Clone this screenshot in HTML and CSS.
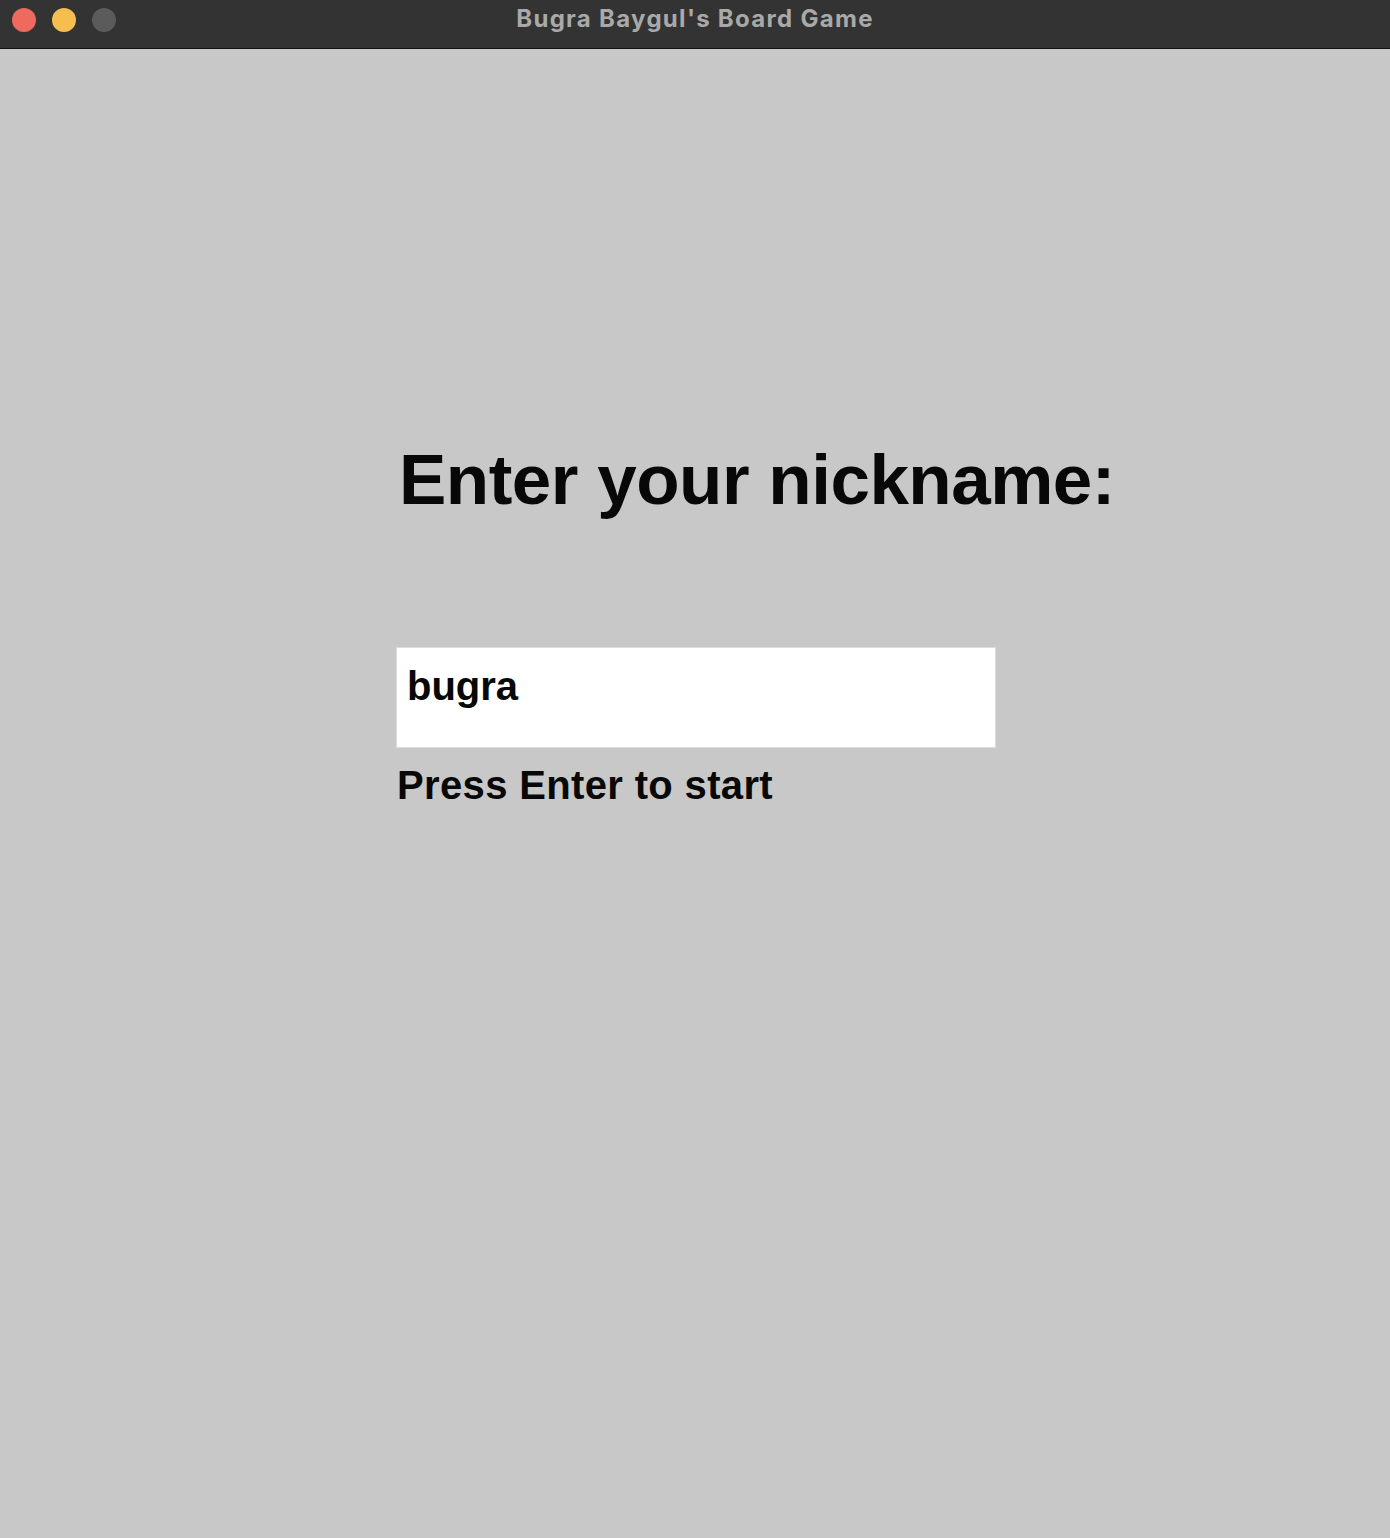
FILE: index.html
```html
<!DOCTYPE html>
<html lang="en">
<head>
<meta charset="utf-8">
<title>Bugra Baygul's Board Game</title>
<link rel="stylesheet" href="styles.css">
</head>
<body>
<div class="window">
  <header class="titlebar">
    <div class="lights">
      <span class="light light-close"></span>
      <span class="light light-min"></span>
      <span class="light light-max"></span>
    </div>
    <div class="title">Bugra Baygul's Board Game</div>
    <div class="spacer"></div>
  </header>
  <main class="content">
    <h1 class="heading">Enter your nickname:</h1>
    <div class="nickname-field">bugra</div>
    <p class="hint">Press Enter to start</p>
  </main>
</div>
</body>
</html>
```

FILE: styles.css
```css
html, body {
  margin: 0;
  padding: 0;
}

body {
  background: #c8c8c8;
  font-family: "Liberation Sans", Arial, sans-serif;
  color: #080808;
}

.window {
  min-height: 1538px;
  display: flex;
  flex-direction: column;
}

.titlebar {
  height: 48px;
  background: #333333;
  border-bottom: 1px solid #111111;
  display: grid;
  grid-template-columns: 1fr auto 1fr;
  align-items: start;
}

.lights {
  display: flex;
  gap: 16px;
  padding: 8px 0 0 12px;
}

.light {
  width: 24px;
  height: 24px;
  border-radius: 50%;
  display: block;
}

.light-close { background: #ee6a5f; }
.light-min { background: #f5be4f; }
.light-max { background: #5b5b5b; }

.title {
  font-family: "Inter", "Liberation Sans", sans-serif;
  font-weight: 700;
  font-size: 24px;
  line-height: 24px;
  letter-spacing: 1.3px;
  color: #a9a9a9;
  padding-top: 7px;
  white-space: nowrap;
}

.content {
  flex: 1;
  padding: 395px 0 0 396px;
  display: flex;
  flex-direction: column;
  align-items: flex-start;
}

.heading {
  margin: 0 0 0 3px;
  font-size: 71px;
  line-height: 71px;
  font-weight: 700;
  letter-spacing: -0.5px;
}

.nickname-field {
  margin-top: 132px;
  width: 588px;
  height: 81px;
  background: #ffffff;
  border: 1px solid #dcdcdc;
  padding: 18px 0 0 10px;
  font-size: 40px;
  line-height: 40px;
  font-weight: 700;
}

.hint {
  margin: 17px 0 0 1px;
  font-size: 40px;
  line-height: 40px;
  font-weight: 700;
  letter-spacing: 0.35px;
}
```
